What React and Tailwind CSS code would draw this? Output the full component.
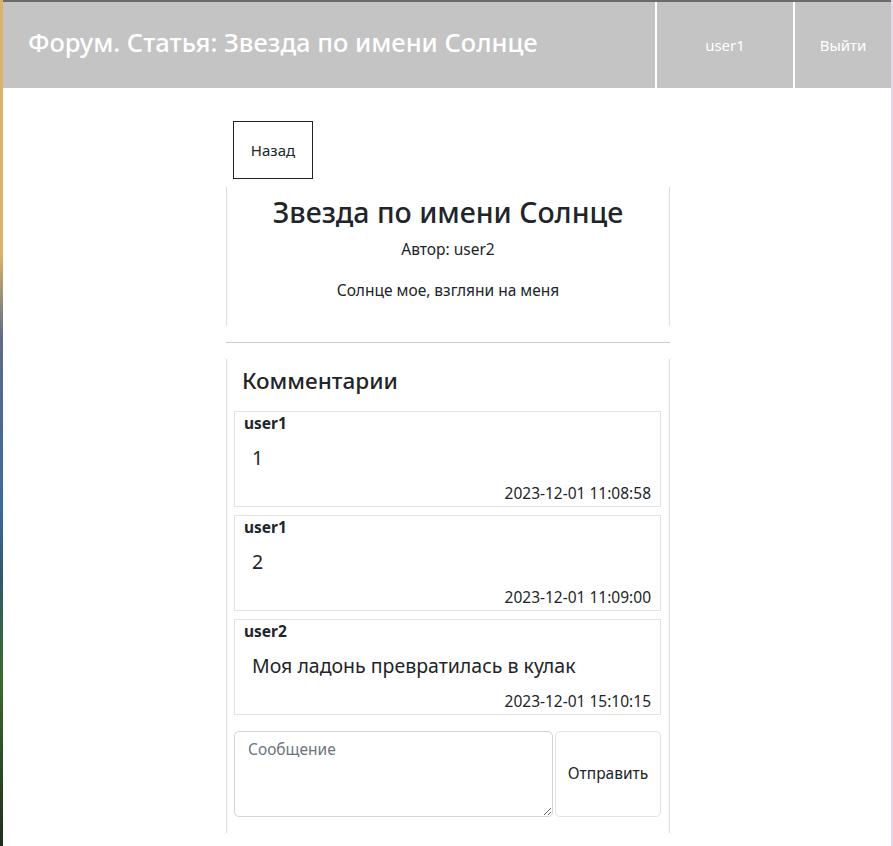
export default function App() {
  const comments = [
    { user: 'user1', text: '1', date: '2023-12-01 11:08:58' },
    { user: 'user1', text: '2', date: '2023-12-01 11:09:00' },
    { user: 'user2', text: 'Моя ладонь превратилась в кулак', date: '2023-12-01 15:10:15' },
  ];

  return (
    <div className="flex min-h-[846px] w-[893px] font-['Noto_Sans',sans-serif] text-[#212529]">
      {/* left edge: wallpaper peeking through */}
      <div className="w-[3px] shrink-0 bg-[linear-gradient(to_bottom,#d9b46a_0%,#d9b46a_30%,#5d6b86_40%,#3b6a9c_60%,#2f5a6a_68%,#3c6a2c_80%,#1d2f1c_100%)]" />

      <div className="flex min-w-0 flex-1 flex-col">
        <div className="h-[2px] bg-[#6b6b6b]" />
        <header className="flex h-[86px] items-stretch bg-[#c4c4c4] text-white">
          <h1 className="flex flex-1 items-center pb-[6px] pl-[25px] text-[25.5px] font-medium">
            Форум. Статья: Звезда по имени Солнце
          </h1>
          <div className="w-[2px] bg-white" />
          <div className="flex w-[136px] items-center justify-center text-[15px]">user1</div>
          <div className="w-[2px] bg-white" />
          <div className="flex w-[96px] items-center justify-center text-[15px]">Выйти</div>
        </header>

        <main className="flex w-[444px] flex-col pt-[33px] pb-[14px] ml-[223px]">
          <div className="px-[7px]">
            <button className="h-[58px] w-[80px] border border-[#222] text-[15px]">Назад</button>
          </div>

          <section className="mt-[8px] flex h-[139px] flex-col items-center border-x border-[#ddd] pt-[8px]">
            <h2 className="text-[28.5px] font-medium leading-[34px]">Звезда по имени Солнце</h2>
            <p className="mt-[9px] text-[15.5px]">Автор: user2</p>
            <p className="mt-[18px] text-[15.5px]">Солнце мое, взгляни на меня</p>
          </section>

          <hr className="mt-[16px] border-t border-[#ccc]" />

          <section className="mt-[16px] flex flex-col border-x border-[#ddd] pl-[7px] pr-[8px] pb-[16px]">
            <h3 className="pl-[8px] pt-[8px] text-[22.5px] font-medium leading-[28px]">Комментарии</h3>
            <div className="mt-[16px] flex flex-col gap-[8px]">
              {comments.map((c, i) => (
                <div key={i} className="flex h-[96px] flex-col border border-[#e2e2e2] px-[9px]">
                  <div className="text-[15.5px] font-bold leading-[22px]">{c.user}</div>
                  <div className="mt-[11px] pl-[8px] text-[19.5px] leading-[26px]">{c.text}</div>
                  <div className="mt-auto pb-[2px] text-right text-[15.5px] leading-[22px]">{c.date}</div>
                </div>
              ))}
            </div>
            <div className="mt-[16px] flex gap-[2px]">
              <textarea
                placeholder="Сообщение"
                className="h-[86px] flex-1 rounded-[5px] border border-[#ced4da] px-[13px] py-[6px] text-[15.5px] placeholder:text-[#6c757d]"
              />
              <button className="h-[86px] w-[106px] rounded-[5px] border border-[#e2e2e2] text-[15.5px]">Отправить</button>
            </div>
          </section>
        </main>
      </div>

      <div className="w-[2px] shrink-0 bg-[#e6d6e8]" />
    </div>
  );
}
